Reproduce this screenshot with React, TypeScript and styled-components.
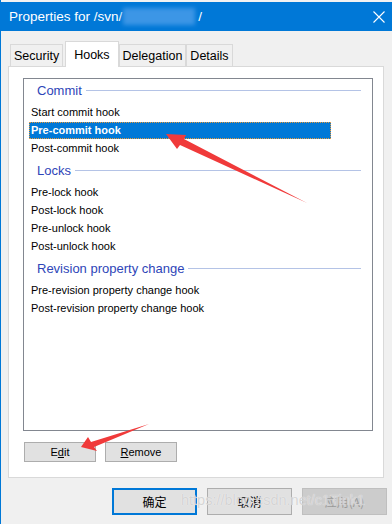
import styled, { createGlobalStyle } from 'styled-components'

type Hook = { label: string; selected?: boolean }
type Group = { title: string; hooks: Hook[] }

const groups: Group[] = [
  {
    title: 'Commit',
    hooks: [
      { label: 'Start commit hook' },
      { label: 'Pre-commit hook', selected: true },
      { label: 'Post-commit hook' },
    ],
  },
  {
    title: 'Locks',
    hooks: [
      { label: 'Pre-lock hook' },
      { label: 'Post-lock hook' },
      { label: 'Pre-unlock hook' },
      { label: 'Post-unlock hook' },
    ],
  },
  {
    title: 'Revision property change',
    hooks: [
      { label: 'Pre-revision property change hook' },
      { label: 'Post-revision property change hook' },
    ],
  },
]

const tabs = ['Security', 'Hooks', 'Delegation', 'Details']

export default function App() {
  return (
    <>
      <GlobalStyle />
      <Window>
        <TopStrip />
        <TitleBar>
          <Title>Properties for /svn/</Title>
          <Blurred />
          <Title>/</Title>
          <Close>
            <svg width="12" height="12" viewBox="0 0 12 12">
              <path d="M0.5 0.5 L11.5 11.5 M11.5 0.5 L0.5 11.5" stroke="#fff" strokeWidth="1.1" fill="none" />
            </svg>
          </Close>
        </TitleBar>

        <Body>
          <TabRow>
            {tabs.map((t) => (
              <Tab key={t} $active={t === 'Hooks'}>
                {t}
              </Tab>
            ))}
          </TabRow>

          <Panel>
            <HookList>
              {groups.map((g) => (
                <div key={g.title}>
                  <GroupHeader>
                    <GroupTitle>{g.title}</GroupTitle>
                    <GroupLine />
                  </GroupHeader>
                  {g.hooks.map((h) => (
                    <HookRow key={h.label}>
                      <HookLabel $selected={h.selected}>{h.label}</HookLabel>
                    </HookRow>
                  ))}
                </div>
              ))}
            </HookList>

            <ActionRow>
              <ActionButton>
                E<u>d</u>it
              </ActionButton>
              <ActionButton>
                <u>R</u>emove
              </ActionButton>
            </ActionRow>
          </Panel>

          <Footer>
            <DialogButton $variant="primary">确定</DialogButton>
            <DialogButton>取消</DialogButton>
            <DialogButton $variant="disabled">应用(A)</DialogButton>
          </Footer>
        </Body>

        <Watermark>https://blog.csdn.net/c1Tink1</Watermark>

        <Arrows width="392" height="524" viewBox="0 0 392 524">
          <polygon points="166,134 186,135 184,139 307,203 180,145 177,149" fill="#f03a3a" />
          <polygon points="81,447 88,437 91,442 149,424 94,447 97,451" fill="#f03a3a" />
        </Arrows>
      </Window>
    </>
  )
}

const GlobalStyle = createGlobalStyle`
  body {
    margin: 0;
    font-family: "Liberation Sans", Arial, sans-serif;
  }
`

const Window = styled.div`
  position: relative;
  width: 392px;
  height: 524px;
  box-sizing: border-box;
  border-left: 1px solid #0078d7;
  background: #f0f0f0;
  overflow: hidden;
`

const TopStrip = styled.div`
  height: 2px;
  background: #f2f2f2;
`

const TitleBar = styled.div`
  height: 29px;
  display: flex;
  align-items: center;
  padding-left: 8px;
  background: #0078d7;
  color: #fff;
`

const Title = styled.span`
  font-size: 13.5px;
  white-space: pre;
`

const Blurred = styled.span`
  display: inline-block;
  width: 72px;
  height: 17px;
  margin: 0 3px 0 1px;
  background: #3c96e6;
  filter: blur(2px);
`

const Close = styled.span`
  margin-left: auto;
  margin-right: 7px;
  display: flex;
`

const Body = styled.div`
  padding: 10px 0 0 7px;
`

const TabRow = styled.div`
  display: flex;
  align-items: flex-end;
  height: 25px;
  padding-left: 2px;
`

const Tab = styled.div<{ $active?: boolean }>`
  position: relative;
  box-sizing: border-box;
  display: flex;
  align-items: center;
  font-size: 12.5px;
  color: #000;
  border: 1px solid #d9d9d9;
  border-bottom: none;
  height: ${(p) => (p.$active ? '26px' : '22px')};
  margin-bottom: ${(p) => (p.$active ? '-1px' : '0')};
  padding: ${(p) => (p.$active ? '0 8px' : '0 3px')};
  margin-left: ${(p) => (p.$active ? '2px' : '0')};
  background: ${(p) => (p.$active ? '#fff' : '#f0f0f0')};
  z-index: ${(p) => (p.$active ? 1 : 0)};

  & + & {
    border-left: ${(p) => (p.$active ? '1px solid #d9d9d9' : 'none')};
  }
`

const Panel = styled.div`
  width: 376px;
  height: 412px;
  box-sizing: border-box;
  border: 1px solid #d9d9d9;
  background: #fff;
  padding: 11px 10px 15px 14px;
`

const HookList = styled.div`
  height: 353px;
  box-sizing: border-box;
  border: 1px solid #828790;
  background: #fff;
`

const GroupHeader = styled.div`
  display: flex;
  align-items: center;
  height: 24px;
  box-sizing: border-box;
  padding: 0 11px 2px 13px;

  div + div > & {
    margin-top: 2px;
  }
`

const GroupTitle = styled.span`
  font-size: 13px;
  color: #2e45b8;
`

const GroupLine = styled.span`
  flex: 1;
  height: 1px;
  margin-left: 4px;
  background: #b4c3e6;
`

const HookRow = styled.div`
  height: 18px;
  display: flex;
  align-items: center;
  padding-left: 5px;
`

const HookLabel = styled.div<{ $selected?: boolean }>`
  box-sizing: border-box;
  width: 302px;
  height: 17px;
  display: flex;
  align-items: center;
  padding-left: 1px;
  font-size: 11px;
  border: 1px ${(p) => (p.$selected ? 'dotted #e89a3c' : 'solid transparent')};
  background: ${(p) => (p.$selected ? '#0078d7' : 'transparent')};
  color: ${(p) => (p.$selected ? '#fff' : '#000')};
  font-weight: ${(p) => (p.$selected ? 700 : 400)};
`

const ActionRow = styled.div`
  display: flex;
  gap: 9px;
  margin: 11px 0 0 1px;
`

const ActionButton = styled.div`
  width: 72px;
  height: 20px;
  box-sizing: border-box;
  display: flex;
  align-items: center;
  justify-content: center;
  font-size: 11px;
  background: #e1e1e1;
  border: 1px solid #adadad;
  color: #000;
`

const Footer = styled.div`
  display: flex;
  justify-content: flex-end;
  gap: 10px;
  margin-top: 10px;
  padding-right: 5px;
`

const DialogButton = styled.div<{ $variant?: 'primary' | 'disabled' }>`
  width: 85px;
  height: 27px;
  box-sizing: border-box;
  display: flex;
  align-items: center;
  justify-content: center;
  font-family: "Noto Sans CJK SC", "Liberation Sans", sans-serif;
  font-size: 12px;
  background: ${(p) => (p.$variant === 'disabled' ? '#cccccc' : '#e1e1e1')};
  color: ${(p) => (p.$variant === 'disabled' ? '#9a9a9a' : '#000')};
  border: ${(p) =>
    p.$variant === 'primary'
      ? '2px solid #0078d7'
      : p.$variant === 'disabled'
        ? '1px solid #bfbfbf'
        : '1px solid #adadad'};
`

const Watermark = styled.div`
  position: absolute;
  left: 180px;
  top: 492px;
  font-size: 14.5px;
  color: rgba(205, 205, 205, 0.85);
  text-shadow: 0 0 1px rgba(255, 255, 255, 0.9);
  white-space: nowrap;
  pointer-events: none;
`

const Arrows = styled.svg`
  position: absolute;
  left: -1px;
  top: 0;
  pointer-events: none;
`
